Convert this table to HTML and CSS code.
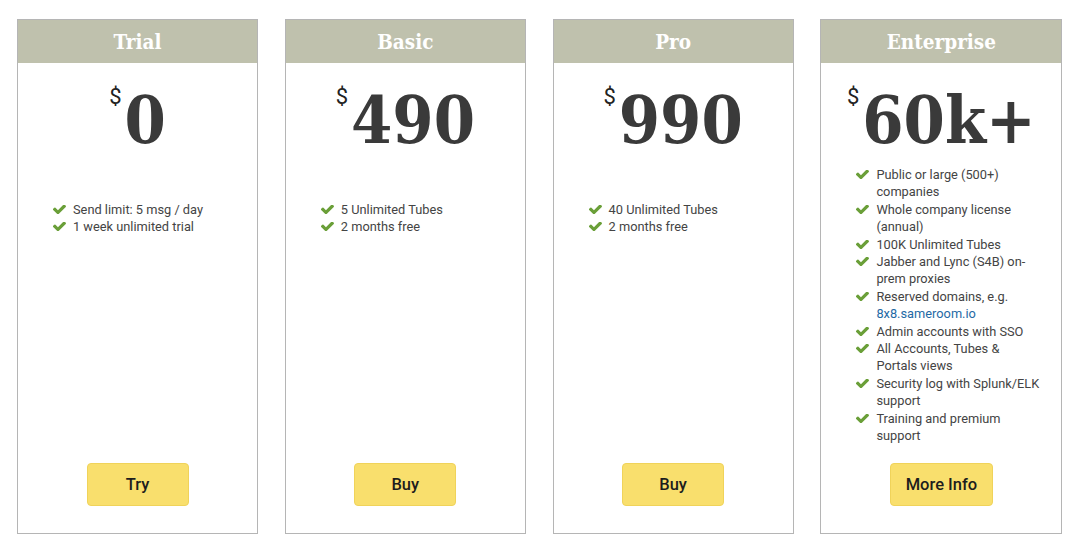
FILE: index.html
```html
<!DOCTYPE html>
<html lang="en">
<head>
<meta charset="utf-8">
<title>Pricing</title>
<link rel="stylesheet" href="styles.css">
</head>
<body>
<svg width="0" height="0" class="defs" aria-hidden="true">
  <symbol id="check" viewBox="128 430 1543 1024">
    <path d="M1671 566q0 40-28 68l-724 724-136 136q-28 28-68 28t-68-28l-136-136-362-362q-28-28-28-68t28-68l136-136q28-28 68-28t68 28l294 295 656-657q28-28 68-28t68 28l136 136q28 28 28 68z"/>
  </symbol>
</svg>
<main class="plans">
  <section class="card">
    <h2 class="card__title">Trial</h2>
    <div class="price"><span class="price__cur">$</span><span class="price__val">0</span></div>
    <ul class="features features--short">
      <li><svg class="ico"><use href="#check"/></svg><span>Send limit: 5 msg / day</span></li>
      <li><svg class="ico"><use href="#check"/></svg><span>1 week unlimited trial</span></li>
    </ul>
    <a class="btn" href="#">Try</a>
  </section>
  <section class="card">
    <h2 class="card__title">Basic</h2>
    <div class="price"><span class="price__cur">$</span><span class="price__val">490</span></div>
    <ul class="features features--short">
      <li><svg class="ico"><use href="#check"/></svg><span>5 Unlimited Tubes</span></li>
      <li><svg class="ico"><use href="#check"/></svg><span>2 months free</span></li>
    </ul>
    <a class="btn" href="#">Buy</a>
  </section>
  <section class="card">
    <h2 class="card__title">Pro</h2>
    <div class="price"><span class="price__cur">$</span><span class="price__val">990</span></div>
    <ul class="features features--short">
      <li><svg class="ico"><use href="#check"/></svg><span>40 Unlimited Tubes</span></li>
      <li><svg class="ico"><use href="#check"/></svg><span>2 months free</span></li>
    </ul>
    <a class="btn" href="#">Buy</a>
  </section>
  <section class="card">
    <h2 class="card__title">Enterprise</h2>
    <div class="price"><span class="price__cur">$</span><span class="price__val">60k+</span></div>
    <ul class="features">
      <li><svg class="ico"><use href="#check"/></svg><span>Public or large (500+) companies</span></li>
      <li><svg class="ico"><use href="#check"/></svg><span>Whole company license (annual)</span></li>
      <li><svg class="ico"><use href="#check"/></svg><span>100K Unlimited Tubes</span></li>
      <li><svg class="ico"><use href="#check"/></svg><span>Jabber and Lync (S4B) on-prem proxies</span></li>
      <li><svg class="ico"><use href="#check"/></svg><span>Reserved domains, e.g. <a class="link" href="#">8x8.sameroom.io</a></span></li>
      <li><svg class="ico"><use href="#check"/></svg><span>Admin accounts with SSO</span></li>
      <li><svg class="ico"><use href="#check"/></svg><span>All Accounts, Tubes &amp; Portals views</span></li>
      <li><svg class="ico"><use href="#check"/></svg><span>Security log with Splunk/ELK support</span></li>
      <li><svg class="ico"><use href="#check"/></svg><span>Training and premium support</span></li>
    </ul>
    <a class="btn" href="#">More Info</a>
  </section>
</main>
</body>
</html>
```
FILE: styles.css
```css
* { box-sizing: border-box; }
html, body { margin: 0; padding: 0; background: #fff; }
body { font-family: Roboto, "Liberation Sans", sans-serif; color: #444; }
.defs { position: absolute; }

.plans {
  display: grid;
  grid-template-columns: 241px 241px 241px 242px;
  column-gap: 26.8px;
  padding: 19px 8px 0 17px;
}

.card {
  height: 515px;
  border: 1px solid #b5b5b5;
  display: flex;
  flex-direction: column;
  align-items: stretch;
}

.card__title {
  margin: 0;
  height: 43px;
  line-height: 44px;
  background: #bfc1ad;
  color: #fff;
  text-align: center;
  font-family: "DejaVu Serif Condensed", "DejaVu Serif", serif;
  font-stretch: condensed;
  font-weight: bold;
  font-size: 20.5px;
}

.price {
  display: flex;
  justify-content: center;
  align-items: flex-start;
  margin-top: 22px;
  height: 70px;
  color: #3a3a3a;
}
.price__cur {
  font-family: Roboto, sans-serif;
  font-size: 22px;
  line-height: 1;
  margin-top: 1px;
  margin-right: 3px;
  color: #222;
}
.price__val {
  font-family: "DejaVu Serif Condensed", "DejaVu Serif", serif;
  font-stretch: condensed;
  font-weight: bold;
  font-size: 66px;
  line-height: 70px;
}

.features {
  list-style: none;
  margin: 11px 0 0;
  padding: 0 21px 0 35px;
  font-size: 12.8px;
  line-height: 17.4px;
}
.features--short { margin-top: 46px; }
.features li { display: flex; align-items: flex-start; }
.ico {
  width: 13px;
  height: 9px;
  flex: none;
  fill: #6a9f38;
  margin: 4px 7px 0 0;
}
.link { color: #1f6aa5; text-decoration: none; }

.btn {
  margin: auto auto 27px;
  width: 102px;
  height: 43px;
  display: flex;
  align-items: center;
  justify-content: center;
  background: #f9df6d;
  border: 1px solid #f0d35a;
  border-radius: 4px;
  color: #1d1d1d;
  font-weight: 500;
  font-size: 16.5px;
  text-decoration: none;
}
.card:last-child .btn { width: 103px; }
```
